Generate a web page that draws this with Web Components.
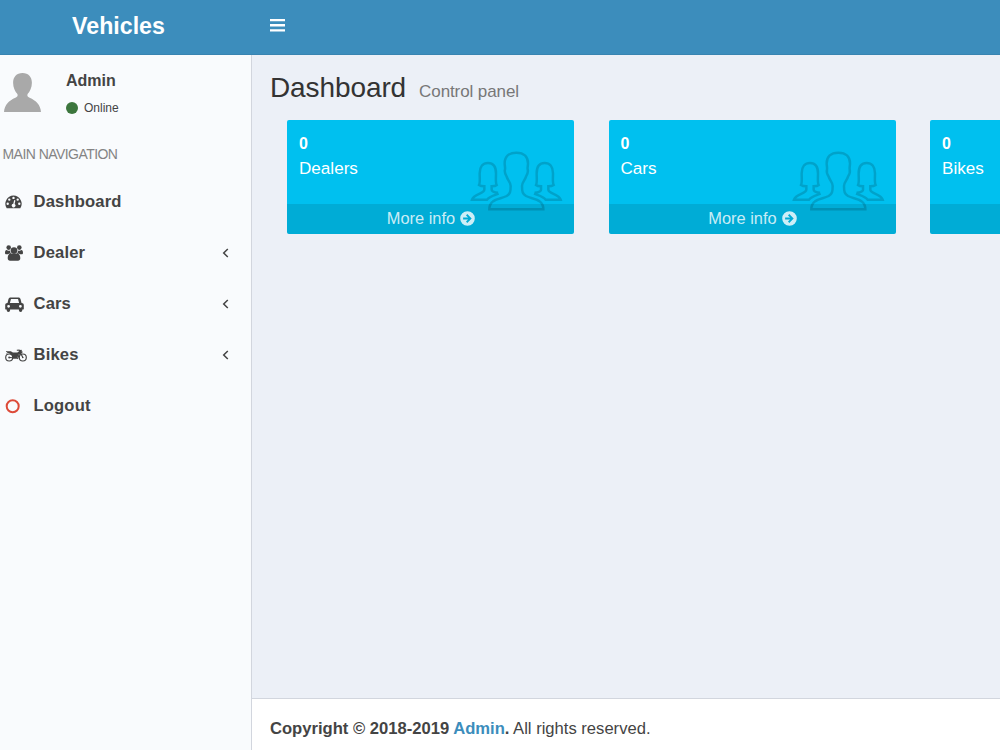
<!DOCTYPE html>
<html lang="en"><head><meta charset="utf-8"><title>Vehicles</title>
<style>
html,body{margin:0;height:100%;overflow:hidden}
body{font-family:"Liberation Sans",Arial,sans-serif;font-size:16px;color:#444}
</style></head><body>
<vehicle-app></vehicle-app>
<script>
const define=(name,html)=>{
  const t=document.createElement('template');t.innerHTML=html;
  customElements.define(name,class extends HTMLElement{
    constructor(){super();this.attachShadow({mode:'open'}).append(t.content.cloneNode(true));}
  });
};
const icons={
  bars:['0 0 15 13','<path d="M0 0h15v2.300H0zM0 5.100h15v2.300H0zM0 10.300h15v2.300H0z"/>'],
  left:['0 0 7 10','<path d="M5.800 1 1.700 5l4.100 4" fill="none" stroke="currentColor" stroke-width="1.500"/>'],
  arrow:['0 0 15 15','<path fill-rule="evenodd" d="M7.500.2a7.300 7.300 0 1 1 0 14.600 7.300 7.300 0 0 1 0-14.600zM3.100 6.500v2h5L6 10.600l1.300 1.300 4.400-4.400-4.400-4.400L6 4.400l2.100 2.100z"/>'],
  dash:['0 0 17 14','<path fill-rule="evenodd" d="M8.500.5A8.300 8.300 0 0 0 1.700 13.300h13.600A8.300 8.300 0 0 0 8.500.5zM8.500 1.700a1.200 1.200 0 1 1 0 2.400 1.200 1.200 0 0 1 0-2.400zM4.300 3.400a1.200 1.200 0 1 1 0 2.400 1.200 1.200 0 0 1 0-2.400zM12.700 3.400a1.200 1.200 0 1 1 0 2.400 1.200 1.200 0 0 1 0-2.400zM2.700 7.600a1.200 1.200 0 1 1 0 2.400 1.200 1.200 0 0 1 0-2.400zM14.300 7.600a1.200 1.200 0 1 1 0 2.400 1.200 1.200 0 0 1 0-2.400zM9.200 5.100l1.200.3-.8 3.700a1.800 1.800 0 1 1-1.300-.3z"/>'],
  users:['0 0 18 16','<circle cx="3.700" cy="2.600" r="2.300"/><circle cx="14.300" cy="2.600" r="2.300"/><circle cx="9" cy="5.600" r="3.300"/><path d="M1.500 5.100c1.300.9 2.500.9 3.700.4-.2 1.200.1 2.100.8 3H4.300L3 9.200H1.400C.5 9.200 0 8.800 0 7.900 0 6.600.5 5 1.500 5.100zM16.500 5.100c-1.300.9-2.500.9-3.700.4.2 1.200-.1 2.100-.8 3h1.700l1.300.7h1.600c.9 0 1.400-.4 1.400-1.300 0-1.300-.5-2.900-1.500-2.800zM5.500 8.400h7c2 .3 2.800 2.700 2.800 4.900 0 1.500-.9 2.400-2.300 2.400H5c-1.400 0-2.300-.9-2.300-2.400 0-2.200.8-4.600 2.800-4.900z"/>'],
  car:['0 0 19 15','<path fill-rule="evenodd" d="M5.600.5h7.800c1 0 1.900.7 2.100 1.600l1 4h.2c1.200 0 2.100.9 2.100 2v4c0 .3-.2.5-.5.5h-1v.7a1.700 1.700 0 0 1-3.400 0v-.7H5.100v.7a1.700 1.700 0 0 1-3.400 0v-.7h-1c-.3 0-.5-.2-.5-.5v-4c0-1.100.9-2 2.100-2h.2l1-4C3.700 1.200 4.600.5 5.600.5zM5.900 2.300 4.900 6.100h9.200l-1-3.800c0-.1-.1-.2-.3-.2H6.200c-.2 0-.3.1-.3.2zM3.600 7.900a1.400 1.400 0 1 0 0 2.800 1.400 1.400 0 0 0 0-2.800zM15.400 7.900a1.400 1.400 0 1 0 0 2.800 1.400 1.400 0 0 0 0-2.800z"/>'],
  bike:['0 0 22 13','<g fill="none" stroke="currentColor" stroke-width="1.150"><circle cx="4.200" cy="8.500" r="3.500"/><circle cx="17.800" cy="8.500" r="3.500"/><path d="m11.800 1.200 2.400-.2 3.600 7.500M4.200 8.500l4 .2M12.500 10l1.900-5.300 3.100-2"/></g><path d="M1 2.200h4.800l2.100 1.300h4.500l1.600-1.300h1.900v2l-1.900.5-2.100 5.100H8.100C7.900 6.900 6 4.500 3.200 4.100l-2.600.7 2.100-1.600L1 3zM14.500 1.300l1.500-.6c.5-.2.8.1.8.6v1.300c0 .5-.3.6-.8.5l-1.500-.6z"/><circle cx="4.200" cy="8.500" r="1"/><circle cx="17.800" cy="8.500" r=".8"/>'],
  ring:['0 0 15 15','<circle cx="7.700" cy="7.200" r="6" fill="none" stroke="currentColor" stroke-width="2"/>'],
  user:['0 0 37 40','<path d="M18.500 0c6 0 9.400 4 9.400 9.700 0 5-2 8.800-4.300 11.300-.7 1.800 0 3 2 3.800C32 27.500 36.500 32 37 39H0c.5-7 5-11.500 11.400-14.200 2-.8 2.700-2 2-3.800-2.300-2.500-4.300-6.300-4.300-11.300C9.100 4 12.500 0 18.500 0z"/>'],
  people:['12 12 282 192','<g fill="none" stroke="currentColor" stroke-width="7.500"><path d="M151 20C127 20 116 34 116 52C116 60 118 64 117 70C115 77 117 84 122 92C125 103 134 108 134 120C134 138 132 144 122 150C108 157 90 158 80 167C73 173 70 180 70 190H232C232 180 229 173 222 167C212 158 194 157 180 150C170 144 168 138 168 120C168 108 177 103 180 92C185 84 187 77 185 70C184 64 186 60 186 52C186 34 175 20 151 20Z"/><path d="M96 140C86 139 77 137 77 131V121C84 121 89 120 92 117C88 110 90 98 90 82C90 62 81 51 66 51S41 62 41 82C41 98 43 110 39 117C43 120 48 121 55 121V131C54 145 24 142 18 161H63C71 151 83 149 98 143"/><path d="M206 140C216 139 225 137 225 131V121C218 121 213 120 210 117C214 110 212 98 212 82C212 62 221 51 236 51S261 62 261 82C261 98 259 110 263 117C259 120 254 121 247 121V131C248 145 278 142 284 161H239C231 151 219 149 204 143"/></g>']
};
customElements.define('ui-icon',class extends HTMLElement{
  connectedCallback(){
    const i=icons[this.getAttribute('name')];
    if(!this.shadowRoot)this.attachShadow({mode:'open'}).innerHTML=`<style>:host{display:block;flex:none}svg{display:block;width:100%;height:100%}</style><svg viewBox="${i[0]}" fill="currentColor" preserveAspectRatio="none">${i[1]}</svg>`;
  }
});
define('app-header',`<style>
:host{display:flex;flex:none;height:54.500px;box-sizing:border-box;background:#3c8dbc;border-bottom:1px solid #3884b1;color:#fff;align-items:center}
b{width:237px;text-align:center;font-size:23.200px;line-height:26px;padding-bottom:2px}
ui-icon{width:15px;height:13px;margin-left:33px;margin-top:-2.500px}
</style><b>Vehicles</b><ui-icon name="bars"></ui-icon>`);
define('user-panel',`<style>
:host{display:flex;height:72.500px;padding:17.500px 0 0 4px}
ui-icon{width:37px;height:40px;color:#a9a9a9;margin-top:1px}
div{margin-left:25px}b{display:block;line-height:18px}
p{margin:11px 0 0;display:flex;align-items:center;font-size:12px;line-height:14px}
i{width:12px;height:12px;border-radius:50%;background:#3c763d;margin-right:6px}
</style><ui-icon name="user"></ui-icon><div><b>Admin</b><p><i></i>Online</p></div>`);
customElements.define('nav-item',class extends HTMLElement{
  connectedCallback(){
    const [n,w,h]=this.getAttribute('icon').split(' ');
    this.attachShadow({mode:'open'}).innerHTML=`<style>
:host{display:flex;height:51.150px;align-items:center;padding:0 22px 0 5px;font-weight:bold}
.i{width:28.500px}.i ui-icon{width:${w}px;height:${h}px}
span{flex:1;font-size:16.600px;letter-spacing:.150px}.a{width:7px;height:10px}
</style><div class="i"><ui-icon name="${n}" ${n==='ring'?'style="color:#dd4b39"':''}></ui-icon></div><span><slot></slot></span>${this.hasAttribute('more')?'<ui-icon class="a" name="left"></ui-icon>':''}`;
  }
});
define('side-bar',`<style>
:host{display:block;width:251px;background:#f9fbfd;border-right:1px solid #d2d6de}
h2{margin:0;font-size:14px;font-weight:400;color:#848484;height:31.800px;line-height:18px;padding-left:2.500px;letter-spacing:-.55px;white-space:nowrap}
</style><user-panel></user-panel><h2>MAIN NAVIGATION</h2>
<nav><nav-item icon="dash 17 14">Dashboard</nav-item><nav-item icon="users 18 16" more>Dealer</nav-item><nav-item icon="car 19 15" more>Cars</nav-item><nav-item icon="bike 22 13" more>Bikes</nav-item><nav-item icon="ring 15 15">Logout</nav-item></nav>`);
define('info-card',`<style>
:host{display:flex;flex-direction:column;position:relative;flex:none;width:287px;height:114px;background:#00c0ef;border-radius:2px;color:#fff;overflow:hidden}
.t{flex:1;padding:14px 12px 0}b{display:block;line-height:20px}p{margin:5px 0 0;font-size:17.100px;line-height:20px}
.f{height:30px;background:rgba(0,0,0,.1);display:flex;align-items:center;justify-content:center;color:rgba(255,255,255,.8);font-size:16.400px;gap:5px;padding:0 0 1px 1px;box-sizing:border-box}
.f ui-icon{width:15px;height:15px}
:host([plain]) .f>*,:host([plain]) .p{display:none}
.p{position:absolute;right:10px;top:30px;width:94px;height:64px;color:#000;opacity:.15}
</style><div class="t"><b>0</b><p><slot></slot></p></div><ui-icon class="p" name="people"></ui-icon><div class="f"><span>More info</span><ui-icon name="arrow"></ui-icon></div>`);
define('app-content',`<style>
:host{display:flex;flex-direction:column;flex:1;min-width:0;background:#ecf0f7}
main{flex:1;overflow:hidden}
h1{margin:0;padding:17.500px 0 0 18px;height:48px;font-size:28px;font-weight:400;line-height:32px;color:#333;white-space:nowrap;letter-spacing:-.1px}
small{font-size:17px;color:#777;margin-left:13px}
.c{display:flex;gap:34.500px;padding-left:35px}
footer{height:52px;box-sizing:border-box;background:#fff;border-top:1px solid #d2d6de;padding:20px 18px 0;line-height:20px;font-size:16.600px}
em{font-style:normal;color:#3c8dbc}
</style><main><h1>Dashboard<small>Control panel</small></h1><div class="c"><info-card>Dealers</info-card><info-card>Cars</info-card><info-card plain>Bikes</info-card></div></main><footer><b>Copyright © 2018-2019 <em>Admin</em>.</b> All rights reserved.</footer>`);
define('vehicle-app',`<style>
:host{display:flex;flex-direction:column;height:100vh;overflow:hidden}
section{flex:1;display:flex;min-height:0}
</style><app-header></app-header><section><side-bar></side-bar><app-content></app-content></section>`);
</script></body></html>
